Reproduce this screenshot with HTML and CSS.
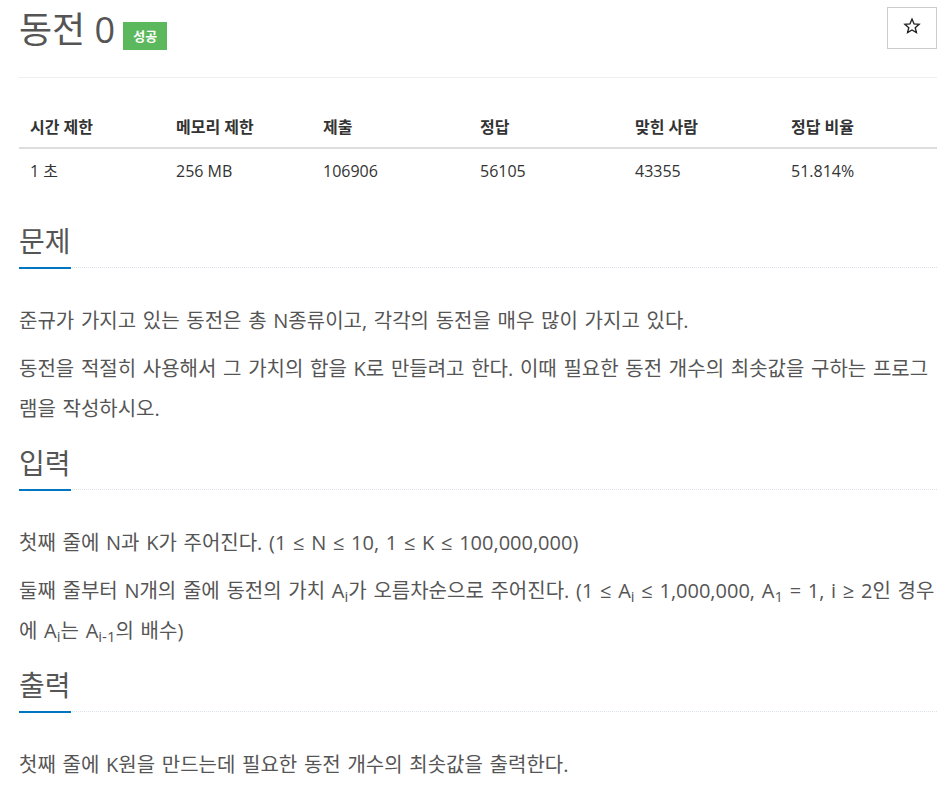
FILE: index.html
```html
<!DOCTYPE html>
<html lang="ko">
<head>
<meta charset="utf-8">
<title>동전 0</title>
<link rel="stylesheet" href="styles.css">
</head>
<body>
<div class="container">
  <div class="page-header">
    <h1 class="title"><span>동전 0</span> <span class="label-ac">성공</span></h1>
    <button class="star-btn" type="button" aria-label="즐겨찾기">
      <svg width="18" height="18" viewBox="0 0 24 24"><path d="M12 2.8l2.7 6.3 6.8.6-5.2 4.5 1.6 6.7L12 17.3l-5.9 3.6 1.6-6.7-5.2-4.5 6.8-.6z" fill="none" stroke="#222" stroke-width="1.8" stroke-linejoin="miter"/></svg>
    </button>
  </div>

  <table class="info">
    <colgroup>
      <col class="c1"><col class="c2"><col class="c3"><col class="c4"><col class="c5"><col class="c6">
    </colgroup>
    <thead>
      <tr><th>시간 제한</th><th>메모리 제한</th><th>제출</th><th>정답</th><th>맞힌 사람</th><th>정답 비율</th></tr>
    </thead>
    <tbody>
      <tr><td>1 초</td><td>256 MB</td><td>106906</td><td>56105</td><td>43355</td><td>51.814%</td></tr>
    </tbody>
  </table>

  <section class="section">
    <div class="headline"><h2>문제</h2></div>
    <p>준규가 가지고 있는 동전은 총 N종류이고, 각각의 동전을 매우 많이 가지고 있다.</p>
    <p>동전을 적절히 사용해서 그 가치의 합을 K로 만들려고 한다. 이때 필요한 동전 개수의 최솟값을 구하는 프로그램을 작성하시오.</p>
  </section>

  <section class="section">
    <div class="headline"><h2>입력</h2></div>
    <p>첫째 줄에 N과 K가 주어진다. (1 ≤ N ≤ 10, 1 ≤ K ≤ 100,000,000)</p>
    <p>둘째 줄부터 N개의 줄에 동전의 가치 A<sub>i</sub>가 오름차순으로 주어진다. (1 ≤ A<sub>i</sub> ≤ 1,000,000, A<sub>1</sub> = 1, i ≥ 2인 경우에 A<sub>i</sub>는 A<sub>i-1</sub>의 배수)</p>
  </section>

  <section class="section">
    <div class="headline"><h2>출력</h2></div>
    <p>첫째 줄에 K원을 만드는데 필요한 동전 개수의 최솟값을 출력한다.</p>
  </section>
</div>
</body>
</html>
```

FILE: styles.css
```css
html, body {
  margin: 0;
  padding: 0;
  background: #fff;
}
body {
  font-family: "Open Sans", "Noto Sans CJK KR", sans-serif;
  color: #333;
}
.container {
  width: 918px;
  padding-left: 19px;
}
.page-header {
  display: flex;
  justify-content: space-between;
  align-items: flex-start;
  border-bottom: 1px solid #eee;
  padding: 9px 0 27px;
}
.title {
  margin: 0;
  font-size: 36px;
  line-height: 40px;
  font-weight: 400;
  color: #555;
  display: flex;
  align-items: center;
}
.label-ac {
  display: inline-block;
  margin-left: 8px;
  background: #5cb85c;
  color: #fff;
  font-size: 13px;
  font-weight: 700;
  line-height: 28px;
  height: 28px;
  padding: 0 10px;
  margin-top: 13px;
}
.star-btn {
  width: 50px;
  height: 42px;
  margin-top: -2px;
  border: 1px solid #ccc;
  background: #fff;
  padding: 0 0 5px;
  display: flex;
  align-items: center;
  justify-content: center;
}
.info {
  width: 918px;
  table-layout: fixed;
  border-collapse: collapse;
  margin-top: 29px;
  margin-bottom: 33px;
  font-size: 16px;
}
.c1 { width: 146px; }
.c2 { width: 147px; }
.c3 { width: 157px; }
.c4 { width: 155px; }
.c5 { width: 156px; }
.c6 { width: 157px; }
.info th, .info td {
  text-align: left;
  padding: 11px 11px 8px;
  line-height: 22px;
}
.info th {
  padding: 9px 11px;
  font-weight: 700;
  border-bottom: 2px solid #ddd;
}
.headline {
  border-bottom: 1px dotted #dbe2ea;
  margin: 16px 0 33px;
}
.headline h2 {
  display: inline-block;
  margin: 0 0 -2px;
  font-size: 28px;
  line-height: 36px;
  font-weight: 400;
  color: #555;
  padding-bottom: 8px;
  border-bottom: 2px solid #0076c0;
}
.section p {
  margin: 0 0 8px;
  font-size: 20px;
  line-height: 40px;
  word-spacing: 1.5px;
  color: #555;
}
sub {
  font-size: 75%;
  line-height: 0;
  position: relative;
  vertical-align: baseline;
  bottom: -0.25em;
}
```
